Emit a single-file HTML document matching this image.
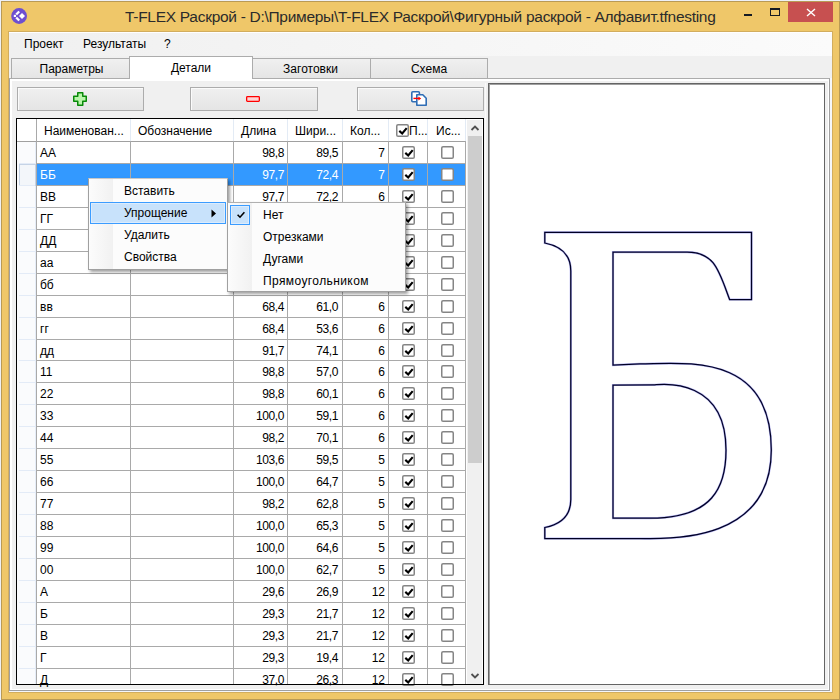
<!DOCTYPE html><html><head><meta charset="utf-8"><style>
*{margin:0;padding:0;box-sizing:border-box}
html,body{width:840px;height:700px;overflow:hidden;background:#eef0f6;font-family:"Liberation Sans",sans-serif;font-size:12px;color:#000}
.a{position:absolute}
.t{position:absolute;white-space:nowrap;line-height:14px}
</style></head><body>
<div class="a" style="left:1px;top:1px;width:839px;height:699px;background:#efc769;border:1px solid #b99a55"></div>
<div class="a" style="left:8px;top:31px;width:825px;height:662px;border:1px solid #d2ad5e"></div>
<svg class="a" style="left:8px;top:4px" width="24" height="24" viewBox="0 0 24 24">
<circle cx="11.1" cy="12" r="7.9" fill="#6e4fd0"/>
<path d="M14 9 L17 12 L14 15 L11 12 Z" fill="#fff"/>
<rect x="5.8" y="10.8" width="2.2" height="2.2" fill="#fff"/>
<path d="M8.2 10.6 L11.2 7.4" stroke="#fff" stroke-width="2.2"/>
<path d="M8.2 13.4 L11.2 16.6" stroke="#fff" stroke-width="2.2"/>
</svg>
<div class="t" style="left:125px;top:8px;font-size:15.5px;line-height:18px;color:#2b2b2b;letter-spacing:-0.29px">T-FLEX Раскрой - D:\Примеры\T-FLEX Раскрой\Фигурный раскрой - Алфавит.tfnesting</div>
<div class="a" style="left:744px;top:14px;width:8px;height:2px;background:#151a22"></div>
<div class="a" style="left:770px;top:8px;width:10px;height:8px;border:1px solid #151a22;border-top-width:2px"></div>
<div class="a" style="left:788px;top:2px;width:45px;height:20px;background:#c75050"></div>
<svg class="a" style="left:806px;top:8px" width="10" height="10" viewBox="0 0 10 10"><path d="M1 1 L9 8 M9 1 L1 8" stroke="#fff" stroke-width="1.4"/></svg>
<div class="a" style="left:9px;top:32px;width:823px;height:660px;background:#f0f0f0"></div>
<div class="a" style="left:830px;top:78px;width:2px;height:614px;background:#f5f7fb"></div>
<div class="a" style="left:9px;top:691px;width:823px;height:1px;background:#f5f7fb"></div>
<div class="a" style="left:9px;top:32px;width:823px;height:24px;background:linear-gradient(90deg,#f0f0f0,#fbfbfb);border-top:1px solid #fff"></div>
<div class="t" style="left:24px;top:37px">Проект</div>
<div class="t" style="left:83px;top:37px">Результаты</div>
<div class="t" style="left:164px;top:37px">?</div>
<div class="a" style="left:9px;top:78px;width:821px;height:613px;border:1px solid #a0a0a0;border-top-color:#acacac;background:#f0f0f0;box-shadow:inset 2px 2px 0 #fff,inset -1px -1px 0 #fff"></div>
<div class="a" style="left:11px;top:58px;width:121px;height:20px;background:linear-gradient(#f0f0f0,#e5e5e5);border:1px solid #acacac;border-bottom:none"></div>
<div class="t" style="left:11px;width:121px;text-align:center;top:62px">Параметры</div>
<div class="a" style="left:250px;top:58px;width:121px;height:20px;background:linear-gradient(#f0f0f0,#e5e5e5);border:1px solid #acacac;border-bottom:none"></div>
<div class="t" style="left:250px;width:121px;text-align:center;top:62px">Заготовки</div>
<div class="a" style="left:370px;top:58px;width:118px;height:20px;background:linear-gradient(#f0f0f0,#e5e5e5);border:1px solid #acacac;border-bottom:none"></div>
<div class="t" style="left:370px;width:118px;text-align:center;top:62px">Схема</div>
<div class="a" style="left:129px;top:56px;width:124px;height:23px;background:#fff;border:1px solid #acacac;border-bottom:none"></div>
<div class="t" style="left:129px;width:124px;text-align:center;top:61px">Детали</div>
<div class="a" style="left:17px;top:87px;width:127px;height:24px;background:linear-gradient(#f0f0f0,#e5e5e5);border:1px solid #acacac;box-shadow:inset 1px 1px 0 #fbfbfb"></div>
<svg class="a" style="left:72px;top:91px" width="16" height="16" viewBox="0 0 16 16"><path d="M5.75 1.75 H10.75 V5.25 H14.25 V10.25 H10.75 V14.25 H5.75 V10.25 H1.75 V5.25 H5.75 Z" fill="#b9f5aa" stroke="#088a08" stroke-width="1.5" stroke-linejoin="round"/></svg>
<div class="a" style="left:190px;top:87px;width:128px;height:24px;background:linear-gradient(#f0f0f0,#e5e5e5);border:1px solid #acacac;box-shadow:inset 1px 1px 0 #fbfbfb"></div>
<svg class="a" style="left:245px;top:95px" width="16" height="8" viewBox="0 0 16 8"><rect x="1.65" y="1.65" width="12.7" height="4.7" rx="0.8" fill="#ffd3d3" stroke="#ff0000" stroke-width="1.3"/></svg>
<div class="a" style="left:357px;top:87px;width:127px;height:24px;background:linear-gradient(#f0f0f0,#e5e5e5);border:1px solid #acacac;box-shadow:inset 1px 1px 0 #fbfbfb"></div>
<svg class="a" style="left:410px;top:90px" width="18" height="17" viewBox="0 0 18 17"><rect x="1.8" y="1.8" width="7.6" height="10" rx="1" fill="#fff" stroke="#2f6db5" stroke-width="1.6"/><path d="M6.8 4.8 H12.8 L16.2 8.2 V15.2 H6.8 Z" fill="#fff" stroke="#2f6db5" stroke-width="1.6" stroke-linejoin="round"/><path d="M3.4 8.4 H9" stroke="#ff0000" stroke-width="1.4"/><path d="M8.4 6.4 L11.2 8.4 L8.4 10.4 Z" fill="#ff0000"/></svg>
<div class="a" style="left:485px;top:83px;width:1px;height:602px;background:#fafafa"></div>
<div class="a" style="left:488px;top:83px;width:337px;height:602px;background:#fff;border:1px solid #646464;box-shadow:inset 1px 1px 0 #a0a0a0"></div>
<div class="a" style="left:16px;top:118px;width:468px;height:567px;background:#fff;border:1px solid #000"></div>
<div class="a" style="left:17px;top:119px;width:449px;height:22px;background:#fff"></div>
<div class="a" style="left:17px;top:141px;width:449px;height:1px;background:#a0a0a0"></div>
<div class="a" style="left:17px;top:142px;width:19px;height:542px;background:#fafbfd;border-right:1px solid #e6edf8"></div>
<div class="a" style="left:130px;top:119px;width:1px;height:22px;background:#e3ebf5"></div>
<div class="a" style="left:233px;top:119px;width:1px;height:22px;background:#e3ebf5"></div>
<div class="a" style="left:287px;top:119px;width:1px;height:22px;background:#e3ebf5"></div>
<div class="a" style="left:342px;top:119px;width:1px;height:22px;background:#e3ebf5"></div>
<div class="a" style="left:388px;top:119px;width:1px;height:22px;background:#e3ebf5"></div>
<div class="a" style="left:427px;top:119px;width:1px;height:22px;background:#e3ebf5"></div>
<div class="a" style="left:465px;top:119px;width:1px;height:22px;background:#e3ebf5"></div>
<div class="a" style="left:36px;top:119px;width:1px;height:22px;background:#a0a0a0"></div>
<div class="t" style="left:44px;top:124px">Наименован...</div>
<div class="t" style="left:138px;top:124px">Обозначение</div>
<div class="t" style="left:241px;top:124px">Длина</div>
<div class="t" style="left:295px;top:124px">Шири...</div>
<div class="t" style="left:350px;top:124px">Кол...</div>
<div class="t" style="left:409px;top:124px">П...</div>
<div class="t" style="left:436px;top:124px">Ис...</div>
<svg class="a" style="left:395px;top:123px" width="15" height="15" viewBox="0 0 15 15"><rect x="1.75" y="1.75" width="11.5" height="11.5" rx="1.3" fill="#fff" stroke="#858585" stroke-width="1.5"/><g transform="translate(1,1)"><path d="M3.3 6.9 L6.2 9.5 L10.7 4.1" fill="none" stroke="#000" stroke-width="2.1"/></g></svg>
<div class="a" style="left:37px;top:163px;width:429px;height:1px;background:#a9a9a9"></div>
<div class="a" style="left:19px;top:163px;width:16px;height:1px;background:#e3ebf7"></div>
<div class="t" style="left:40px;top:146px;color:#000">АА</div>
<div class="t" style="left:224px;width:60px;text-align:right;top:146px;color:#000;letter-spacing:-0.4px">98,8</div>
<div class="t" style="left:288px;width:50px;text-align:right;top:146px;color:#000;letter-spacing:-0.4px">89,5</div>
<div class="t" style="left:343px;width:42px;text-align:right;top:146px;color:#000">7</div>
<svg class="a" style="left:401px;top:145px" width="15" height="15" viewBox="0 0 15 15"><rect x="1.75" y="1.75" width="11.5" height="11.5" rx="1.3" fill="#fff" stroke="#858585" stroke-width="1.5"/><g transform="translate(1,1)"><path d="M3.3 6.9 L6.2 9.5 L10.7 4.1" fill="none" stroke="#000" stroke-width="2.1"/></g></svg>
<svg class="a" style="left:440px;top:145px" width="15" height="15" viewBox="0 0 15 15"><rect x="1.75" y="1.75" width="11.5" height="11.5" rx="1.3" fill="#fff" stroke="#858585" stroke-width="1.5"/><g transform="translate(1,1)"></g></svg>
<div class="a" style="left:37px;top:164px;width:429px;height:21px;background:#3399ff"></div>
<div class="a" style="left:19px;top:164px;width:17px;height:22px;border:1px solid #c5d3e6;background:#f3f6fa"></div>
<div class="a" style="left:37px;top:185px;width:429px;height:1px;background:#a9a9a9"></div>
<div class="a" style="left:19px;top:185px;width:16px;height:1px;background:#e3ebf7"></div>
<div class="t" style="left:40px;top:168px;color:#fff">ББ</div>
<div class="t" style="left:224px;width:60px;text-align:right;top:168px;color:#fff;letter-spacing:-0.4px">97,7</div>
<div class="t" style="left:288px;width:50px;text-align:right;top:168px;color:#fff;letter-spacing:-0.4px">72,4</div>
<div class="t" style="left:343px;width:42px;text-align:right;top:168px;color:#fff">7</div>
<svg class="a" style="left:401px;top:167px" width="15" height="15" viewBox="0 0 15 15"><rect x="1.75" y="1.75" width="11.5" height="11.5" rx="1.3" fill="#fff" stroke="#858585" stroke-width="1.5"/><g transform="translate(1,1)"><path d="M3.3 6.9 L6.2 9.5 L10.7 4.1" fill="none" stroke="#000" stroke-width="2.1"/></g></svg>
<svg class="a" style="left:440px;top:167px" width="15" height="15" viewBox="0 0 15 15"><rect x="1.75" y="1.75" width="11.5" height="11.5" rx="1.3" fill="#fff" stroke="#858585" stroke-width="1.5"/><g transform="translate(1,1)"></g></svg>
<div class="a" style="left:37px;top:207px;width:429px;height:1px;background:#a9a9a9"></div>
<div class="a" style="left:19px;top:207px;width:16px;height:1px;background:#e3ebf7"></div>
<div class="t" style="left:40px;top:190px;color:#000">ВВ</div>
<div class="t" style="left:224px;width:60px;text-align:right;top:190px;color:#000;letter-spacing:-0.4px">97,7</div>
<div class="t" style="left:288px;width:50px;text-align:right;top:190px;color:#000;letter-spacing:-0.4px">72,2</div>
<div class="t" style="left:343px;width:42px;text-align:right;top:190px;color:#000">6</div>
<svg class="a" style="left:401px;top:189px" width="15" height="15" viewBox="0 0 15 15"><rect x="1.75" y="1.75" width="11.5" height="11.5" rx="1.3" fill="#fff" stroke="#858585" stroke-width="1.5"/><g transform="translate(1,1)"><path d="M3.3 6.9 L6.2 9.5 L10.7 4.1" fill="none" stroke="#000" stroke-width="2.1"/></g></svg>
<svg class="a" style="left:440px;top:189px" width="15" height="15" viewBox="0 0 15 15"><rect x="1.75" y="1.75" width="11.5" height="11.5" rx="1.3" fill="#fff" stroke="#858585" stroke-width="1.5"/><g transform="translate(1,1)"></g></svg>
<div class="a" style="left:37px;top:229px;width:429px;height:1px;background:#a9a9a9"></div>
<div class="a" style="left:19px;top:229px;width:16px;height:1px;background:#e3ebf7"></div>
<div class="t" style="left:40px;top:212px;color:#000">ГГ</div>
<div class="t" style="left:224px;width:60px;text-align:right;top:212px;color:#000;letter-spacing:-0.4px">97,7</div>
<div class="t" style="left:288px;width:50px;text-align:right;top:212px;color:#000;letter-spacing:-0.4px">72,2</div>
<div class="t" style="left:343px;width:42px;text-align:right;top:212px;color:#000">6</div>
<svg class="a" style="left:401px;top:211px" width="15" height="15" viewBox="0 0 15 15"><rect x="1.75" y="1.75" width="11.5" height="11.5" rx="1.3" fill="#fff" stroke="#858585" stroke-width="1.5"/><g transform="translate(1,1)"><path d="M3.3 6.9 L6.2 9.5 L10.7 4.1" fill="none" stroke="#000" stroke-width="2.1"/></g></svg>
<svg class="a" style="left:440px;top:211px" width="15" height="15" viewBox="0 0 15 15"><rect x="1.75" y="1.75" width="11.5" height="11.5" rx="1.3" fill="#fff" stroke="#858585" stroke-width="1.5"/><g transform="translate(1,1)"></g></svg>
<div class="a" style="left:37px;top:251px;width:429px;height:1px;background:#a9a9a9"></div>
<div class="a" style="left:19px;top:251px;width:16px;height:1px;background:#e3ebf7"></div>
<div class="t" style="left:40px;top:234px;color:#000">ДД</div>
<div class="t" style="left:224px;width:60px;text-align:right;top:234px;color:#000;letter-spacing:-0.4px">97,7</div>
<div class="t" style="left:288px;width:50px;text-align:right;top:234px;color:#000;letter-spacing:-0.4px">72,2</div>
<div class="t" style="left:343px;width:42px;text-align:right;top:234px;color:#000">6</div>
<svg class="a" style="left:401px;top:233px" width="15" height="15" viewBox="0 0 15 15"><rect x="1.75" y="1.75" width="11.5" height="11.5" rx="1.3" fill="#fff" stroke="#858585" stroke-width="1.5"/><g transform="translate(1,1)"><path d="M3.3 6.9 L6.2 9.5 L10.7 4.1" fill="none" stroke="#000" stroke-width="2.1"/></g></svg>
<svg class="a" style="left:440px;top:233px" width="15" height="15" viewBox="0 0 15 15"><rect x="1.75" y="1.75" width="11.5" height="11.5" rx="1.3" fill="#fff" stroke="#858585" stroke-width="1.5"/><g transform="translate(1,1)"></g></svg>
<div class="a" style="left:37px;top:273px;width:429px;height:1px;background:#a9a9a9"></div>
<div class="a" style="left:19px;top:273px;width:16px;height:1px;background:#e3ebf7"></div>
<div class="t" style="left:40px;top:256px;color:#000">аа</div>
<div class="t" style="left:224px;width:60px;text-align:right;top:256px;color:#000;letter-spacing:-0.4px">68,4</div>
<div class="t" style="left:288px;width:50px;text-align:right;top:256px;color:#000;letter-spacing:-0.4px">61,0</div>
<div class="t" style="left:343px;width:42px;text-align:right;top:256px;color:#000">6</div>
<svg class="a" style="left:401px;top:255px" width="15" height="15" viewBox="0 0 15 15"><rect x="1.75" y="1.75" width="11.5" height="11.5" rx="1.3" fill="#fff" stroke="#858585" stroke-width="1.5"/><g transform="translate(1,1)"><path d="M3.3 6.9 L6.2 9.5 L10.7 4.1" fill="none" stroke="#000" stroke-width="2.1"/></g></svg>
<svg class="a" style="left:440px;top:255px" width="15" height="15" viewBox="0 0 15 15"><rect x="1.75" y="1.75" width="11.5" height="11.5" rx="1.3" fill="#fff" stroke="#858585" stroke-width="1.5"/><g transform="translate(1,1)"></g></svg>
<div class="a" style="left:37px;top:295px;width:429px;height:1px;background:#a9a9a9"></div>
<div class="a" style="left:19px;top:295px;width:16px;height:1px;background:#e3ebf7"></div>
<div class="t" style="left:40px;top:278px;color:#000">бб</div>
<div class="t" style="left:224px;width:60px;text-align:right;top:278px;color:#000;letter-spacing:-0.4px">68,4</div>
<div class="t" style="left:288px;width:50px;text-align:right;top:278px;color:#000;letter-spacing:-0.4px">61,0</div>
<div class="t" style="left:343px;width:42px;text-align:right;top:278px;color:#000">6</div>
<svg class="a" style="left:401px;top:277px" width="15" height="15" viewBox="0 0 15 15"><rect x="1.75" y="1.75" width="11.5" height="11.5" rx="1.3" fill="#fff" stroke="#858585" stroke-width="1.5"/><g transform="translate(1,1)"><path d="M3.3 6.9 L6.2 9.5 L10.7 4.1" fill="none" stroke="#000" stroke-width="2.1"/></g></svg>
<svg class="a" style="left:440px;top:277px" width="15" height="15" viewBox="0 0 15 15"><rect x="1.75" y="1.75" width="11.5" height="11.5" rx="1.3" fill="#fff" stroke="#858585" stroke-width="1.5"/><g transform="translate(1,1)"></g></svg>
<div class="a" style="left:37px;top:317px;width:429px;height:1px;background:#a9a9a9"></div>
<div class="a" style="left:19px;top:317px;width:16px;height:1px;background:#e3ebf7"></div>
<div class="t" style="left:40px;top:300px;color:#000">вв</div>
<div class="t" style="left:224px;width:60px;text-align:right;top:300px;color:#000;letter-spacing:-0.4px">68,4</div>
<div class="t" style="left:288px;width:50px;text-align:right;top:300px;color:#000;letter-spacing:-0.4px">61,0</div>
<div class="t" style="left:343px;width:42px;text-align:right;top:300px;color:#000">6</div>
<svg class="a" style="left:401px;top:299px" width="15" height="15" viewBox="0 0 15 15"><rect x="1.75" y="1.75" width="11.5" height="11.5" rx="1.3" fill="#fff" stroke="#858585" stroke-width="1.5"/><g transform="translate(1,1)"><path d="M3.3 6.9 L6.2 9.5 L10.7 4.1" fill="none" stroke="#000" stroke-width="2.1"/></g></svg>
<svg class="a" style="left:440px;top:299px" width="15" height="15" viewBox="0 0 15 15"><rect x="1.75" y="1.75" width="11.5" height="11.5" rx="1.3" fill="#fff" stroke="#858585" stroke-width="1.5"/><g transform="translate(1,1)"></g></svg>
<div class="a" style="left:37px;top:339px;width:429px;height:1px;background:#a9a9a9"></div>
<div class="a" style="left:19px;top:339px;width:16px;height:1px;background:#e3ebf7"></div>
<div class="t" style="left:40px;top:322px;color:#000">гг</div>
<div class="t" style="left:224px;width:60px;text-align:right;top:322px;color:#000;letter-spacing:-0.4px">68,4</div>
<div class="t" style="left:288px;width:50px;text-align:right;top:322px;color:#000;letter-spacing:-0.4px">53,6</div>
<div class="t" style="left:343px;width:42px;text-align:right;top:322px;color:#000">6</div>
<svg class="a" style="left:401px;top:321px" width="15" height="15" viewBox="0 0 15 15"><rect x="1.75" y="1.75" width="11.5" height="11.5" rx="1.3" fill="#fff" stroke="#858585" stroke-width="1.5"/><g transform="translate(1,1)"><path d="M3.3 6.9 L6.2 9.5 L10.7 4.1" fill="none" stroke="#000" stroke-width="2.1"/></g></svg>
<svg class="a" style="left:440px;top:321px" width="15" height="15" viewBox="0 0 15 15"><rect x="1.75" y="1.75" width="11.5" height="11.5" rx="1.3" fill="#fff" stroke="#858585" stroke-width="1.5"/><g transform="translate(1,1)"></g></svg>
<div class="a" style="left:37px;top:360px;width:429px;height:1px;background:#a9a9a9"></div>
<div class="a" style="left:19px;top:360px;width:16px;height:1px;background:#e3ebf7"></div>
<div class="t" style="left:40px;top:344px;color:#000">дд</div>
<div class="t" style="left:224px;width:60px;text-align:right;top:344px;color:#000;letter-spacing:-0.4px">91,7</div>
<div class="t" style="left:288px;width:50px;text-align:right;top:344px;color:#000;letter-spacing:-0.4px">74,1</div>
<div class="t" style="left:343px;width:42px;text-align:right;top:344px;color:#000">6</div>
<svg class="a" style="left:401px;top:343px" width="15" height="15" viewBox="0 0 15 15"><rect x="1.75" y="1.75" width="11.5" height="11.5" rx="1.3" fill="#fff" stroke="#858585" stroke-width="1.5"/><g transform="translate(1,1)"><path d="M3.3 6.9 L6.2 9.5 L10.7 4.1" fill="none" stroke="#000" stroke-width="2.1"/></g></svg>
<svg class="a" style="left:440px;top:343px" width="15" height="15" viewBox="0 0 15 15"><rect x="1.75" y="1.75" width="11.5" height="11.5" rx="1.3" fill="#fff" stroke="#858585" stroke-width="1.5"/><g transform="translate(1,1)"></g></svg>
<div class="a" style="left:37px;top:382px;width:429px;height:1px;background:#a9a9a9"></div>
<div class="a" style="left:19px;top:382px;width:16px;height:1px;background:#e3ebf7"></div>
<div class="t" style="left:40px;top:365px;color:#000">11</div>
<div class="t" style="left:224px;width:60px;text-align:right;top:365px;color:#000;letter-spacing:-0.4px">98,8</div>
<div class="t" style="left:288px;width:50px;text-align:right;top:365px;color:#000;letter-spacing:-0.4px">57,0</div>
<div class="t" style="left:343px;width:42px;text-align:right;top:365px;color:#000">6</div>
<svg class="a" style="left:401px;top:364px" width="15" height="15" viewBox="0 0 15 15"><rect x="1.75" y="1.75" width="11.5" height="11.5" rx="1.3" fill="#fff" stroke="#858585" stroke-width="1.5"/><g transform="translate(1,1)"><path d="M3.3 6.9 L6.2 9.5 L10.7 4.1" fill="none" stroke="#000" stroke-width="2.1"/></g></svg>
<svg class="a" style="left:440px;top:364px" width="15" height="15" viewBox="0 0 15 15"><rect x="1.75" y="1.75" width="11.5" height="11.5" rx="1.3" fill="#fff" stroke="#858585" stroke-width="1.5"/><g transform="translate(1,1)"></g></svg>
<div class="a" style="left:37px;top:404px;width:429px;height:1px;background:#a9a9a9"></div>
<div class="a" style="left:19px;top:404px;width:16px;height:1px;background:#e3ebf7"></div>
<div class="t" style="left:40px;top:387px;color:#000">22</div>
<div class="t" style="left:224px;width:60px;text-align:right;top:387px;color:#000;letter-spacing:-0.4px">98,8</div>
<div class="t" style="left:288px;width:50px;text-align:right;top:387px;color:#000;letter-spacing:-0.4px">60,1</div>
<div class="t" style="left:343px;width:42px;text-align:right;top:387px;color:#000">6</div>
<svg class="a" style="left:401px;top:386px" width="15" height="15" viewBox="0 0 15 15"><rect x="1.75" y="1.75" width="11.5" height="11.5" rx="1.3" fill="#fff" stroke="#858585" stroke-width="1.5"/><g transform="translate(1,1)"><path d="M3.3 6.9 L6.2 9.5 L10.7 4.1" fill="none" stroke="#000" stroke-width="2.1"/></g></svg>
<svg class="a" style="left:440px;top:386px" width="15" height="15" viewBox="0 0 15 15"><rect x="1.75" y="1.75" width="11.5" height="11.5" rx="1.3" fill="#fff" stroke="#858585" stroke-width="1.5"/><g transform="translate(1,1)"></g></svg>
<div class="a" style="left:37px;top:426px;width:429px;height:1px;background:#a9a9a9"></div>
<div class="a" style="left:19px;top:426px;width:16px;height:1px;background:#e3ebf7"></div>
<div class="t" style="left:40px;top:409px;color:#000">33</div>
<div class="t" style="left:224px;width:60px;text-align:right;top:409px;color:#000;letter-spacing:-0.4px">100,0</div>
<div class="t" style="left:288px;width:50px;text-align:right;top:409px;color:#000;letter-spacing:-0.4px">59,1</div>
<div class="t" style="left:343px;width:42px;text-align:right;top:409px;color:#000">6</div>
<svg class="a" style="left:401px;top:408px" width="15" height="15" viewBox="0 0 15 15"><rect x="1.75" y="1.75" width="11.5" height="11.5" rx="1.3" fill="#fff" stroke="#858585" stroke-width="1.5"/><g transform="translate(1,1)"><path d="M3.3 6.9 L6.2 9.5 L10.7 4.1" fill="none" stroke="#000" stroke-width="2.1"/></g></svg>
<svg class="a" style="left:440px;top:408px" width="15" height="15" viewBox="0 0 15 15"><rect x="1.75" y="1.75" width="11.5" height="11.5" rx="1.3" fill="#fff" stroke="#858585" stroke-width="1.5"/><g transform="translate(1,1)"></g></svg>
<div class="a" style="left:37px;top:448px;width:429px;height:1px;background:#a9a9a9"></div>
<div class="a" style="left:19px;top:448px;width:16px;height:1px;background:#e3ebf7"></div>
<div class="t" style="left:40px;top:431px;color:#000">44</div>
<div class="t" style="left:224px;width:60px;text-align:right;top:431px;color:#000;letter-spacing:-0.4px">98,2</div>
<div class="t" style="left:288px;width:50px;text-align:right;top:431px;color:#000;letter-spacing:-0.4px">70,1</div>
<div class="t" style="left:343px;width:42px;text-align:right;top:431px;color:#000">6</div>
<svg class="a" style="left:401px;top:430px" width="15" height="15" viewBox="0 0 15 15"><rect x="1.75" y="1.75" width="11.5" height="11.5" rx="1.3" fill="#fff" stroke="#858585" stroke-width="1.5"/><g transform="translate(1,1)"><path d="M3.3 6.9 L6.2 9.5 L10.7 4.1" fill="none" stroke="#000" stroke-width="2.1"/></g></svg>
<svg class="a" style="left:440px;top:430px" width="15" height="15" viewBox="0 0 15 15"><rect x="1.75" y="1.75" width="11.5" height="11.5" rx="1.3" fill="#fff" stroke="#858585" stroke-width="1.5"/><g transform="translate(1,1)"></g></svg>
<div class="a" style="left:37px;top:470px;width:429px;height:1px;background:#a9a9a9"></div>
<div class="a" style="left:19px;top:470px;width:16px;height:1px;background:#e3ebf7"></div>
<div class="t" style="left:40px;top:453px;color:#000">55</div>
<div class="t" style="left:224px;width:60px;text-align:right;top:453px;color:#000;letter-spacing:-0.4px">103,6</div>
<div class="t" style="left:288px;width:50px;text-align:right;top:453px;color:#000;letter-spacing:-0.4px">59,5</div>
<div class="t" style="left:343px;width:42px;text-align:right;top:453px;color:#000">5</div>
<svg class="a" style="left:401px;top:452px" width="15" height="15" viewBox="0 0 15 15"><rect x="1.75" y="1.75" width="11.5" height="11.5" rx="1.3" fill="#fff" stroke="#858585" stroke-width="1.5"/><g transform="translate(1,1)"><path d="M3.3 6.9 L6.2 9.5 L10.7 4.1" fill="none" stroke="#000" stroke-width="2.1"/></g></svg>
<svg class="a" style="left:440px;top:452px" width="15" height="15" viewBox="0 0 15 15"><rect x="1.75" y="1.75" width="11.5" height="11.5" rx="1.3" fill="#fff" stroke="#858585" stroke-width="1.5"/><g transform="translate(1,1)"></g></svg>
<div class="a" style="left:37px;top:492px;width:429px;height:1px;background:#a9a9a9"></div>
<div class="a" style="left:19px;top:492px;width:16px;height:1px;background:#e3ebf7"></div>
<div class="t" style="left:40px;top:475px;color:#000">66</div>
<div class="t" style="left:224px;width:60px;text-align:right;top:475px;color:#000;letter-spacing:-0.4px">100,0</div>
<div class="t" style="left:288px;width:50px;text-align:right;top:475px;color:#000;letter-spacing:-0.4px">64,7</div>
<div class="t" style="left:343px;width:42px;text-align:right;top:475px;color:#000">5</div>
<svg class="a" style="left:401px;top:474px" width="15" height="15" viewBox="0 0 15 15"><rect x="1.75" y="1.75" width="11.5" height="11.5" rx="1.3" fill="#fff" stroke="#858585" stroke-width="1.5"/><g transform="translate(1,1)"><path d="M3.3 6.9 L6.2 9.5 L10.7 4.1" fill="none" stroke="#000" stroke-width="2.1"/></g></svg>
<svg class="a" style="left:440px;top:474px" width="15" height="15" viewBox="0 0 15 15"><rect x="1.75" y="1.75" width="11.5" height="11.5" rx="1.3" fill="#fff" stroke="#858585" stroke-width="1.5"/><g transform="translate(1,1)"></g></svg>
<div class="a" style="left:37px;top:514px;width:429px;height:1px;background:#a9a9a9"></div>
<div class="a" style="left:19px;top:514px;width:16px;height:1px;background:#e3ebf7"></div>
<div class="t" style="left:40px;top:497px;color:#000">77</div>
<div class="t" style="left:224px;width:60px;text-align:right;top:497px;color:#000;letter-spacing:-0.4px">98,2</div>
<div class="t" style="left:288px;width:50px;text-align:right;top:497px;color:#000;letter-spacing:-0.4px">62,8</div>
<div class="t" style="left:343px;width:42px;text-align:right;top:497px;color:#000">5</div>
<svg class="a" style="left:401px;top:496px" width="15" height="15" viewBox="0 0 15 15"><rect x="1.75" y="1.75" width="11.5" height="11.5" rx="1.3" fill="#fff" stroke="#858585" stroke-width="1.5"/><g transform="translate(1,1)"><path d="M3.3 6.9 L6.2 9.5 L10.7 4.1" fill="none" stroke="#000" stroke-width="2.1"/></g></svg>
<svg class="a" style="left:440px;top:496px" width="15" height="15" viewBox="0 0 15 15"><rect x="1.75" y="1.75" width="11.5" height="11.5" rx="1.3" fill="#fff" stroke="#858585" stroke-width="1.5"/><g transform="translate(1,1)"></g></svg>
<div class="a" style="left:37px;top:536px;width:429px;height:1px;background:#a9a9a9"></div>
<div class="a" style="left:19px;top:536px;width:16px;height:1px;background:#e3ebf7"></div>
<div class="t" style="left:40px;top:519px;color:#000">88</div>
<div class="t" style="left:224px;width:60px;text-align:right;top:519px;color:#000;letter-spacing:-0.4px">100,0</div>
<div class="t" style="left:288px;width:50px;text-align:right;top:519px;color:#000;letter-spacing:-0.4px">65,3</div>
<div class="t" style="left:343px;width:42px;text-align:right;top:519px;color:#000">5</div>
<svg class="a" style="left:401px;top:518px" width="15" height="15" viewBox="0 0 15 15"><rect x="1.75" y="1.75" width="11.5" height="11.5" rx="1.3" fill="#fff" stroke="#858585" stroke-width="1.5"/><g transform="translate(1,1)"><path d="M3.3 6.9 L6.2 9.5 L10.7 4.1" fill="none" stroke="#000" stroke-width="2.1"/></g></svg>
<svg class="a" style="left:440px;top:518px" width="15" height="15" viewBox="0 0 15 15"><rect x="1.75" y="1.75" width="11.5" height="11.5" rx="1.3" fill="#fff" stroke="#858585" stroke-width="1.5"/><g transform="translate(1,1)"></g></svg>
<div class="a" style="left:37px;top:558px;width:429px;height:1px;background:#a9a9a9"></div>
<div class="a" style="left:19px;top:558px;width:16px;height:1px;background:#e3ebf7"></div>
<div class="t" style="left:40px;top:541px;color:#000">99</div>
<div class="t" style="left:224px;width:60px;text-align:right;top:541px;color:#000;letter-spacing:-0.4px">100,0</div>
<div class="t" style="left:288px;width:50px;text-align:right;top:541px;color:#000;letter-spacing:-0.4px">64,6</div>
<div class="t" style="left:343px;width:42px;text-align:right;top:541px;color:#000">5</div>
<svg class="a" style="left:401px;top:540px" width="15" height="15" viewBox="0 0 15 15"><rect x="1.75" y="1.75" width="11.5" height="11.5" rx="1.3" fill="#fff" stroke="#858585" stroke-width="1.5"/><g transform="translate(1,1)"><path d="M3.3 6.9 L6.2 9.5 L10.7 4.1" fill="none" stroke="#000" stroke-width="2.1"/></g></svg>
<svg class="a" style="left:440px;top:540px" width="15" height="15" viewBox="0 0 15 15"><rect x="1.75" y="1.75" width="11.5" height="11.5" rx="1.3" fill="#fff" stroke="#858585" stroke-width="1.5"/><g transform="translate(1,1)"></g></svg>
<div class="a" style="left:37px;top:580px;width:429px;height:1px;background:#a9a9a9"></div>
<div class="a" style="left:19px;top:580px;width:16px;height:1px;background:#e3ebf7"></div>
<div class="t" style="left:40px;top:563px;color:#000">00</div>
<div class="t" style="left:224px;width:60px;text-align:right;top:563px;color:#000;letter-spacing:-0.4px">100,0</div>
<div class="t" style="left:288px;width:50px;text-align:right;top:563px;color:#000;letter-spacing:-0.4px">62,7</div>
<div class="t" style="left:343px;width:42px;text-align:right;top:563px;color:#000">5</div>
<svg class="a" style="left:401px;top:562px" width="15" height="15" viewBox="0 0 15 15"><rect x="1.75" y="1.75" width="11.5" height="11.5" rx="1.3" fill="#fff" stroke="#858585" stroke-width="1.5"/><g transform="translate(1,1)"><path d="M3.3 6.9 L6.2 9.5 L10.7 4.1" fill="none" stroke="#000" stroke-width="2.1"/></g></svg>
<svg class="a" style="left:440px;top:562px" width="15" height="15" viewBox="0 0 15 15"><rect x="1.75" y="1.75" width="11.5" height="11.5" rx="1.3" fill="#fff" stroke="#858585" stroke-width="1.5"/><g transform="translate(1,1)"></g></svg>
<div class="a" style="left:37px;top:602px;width:429px;height:1px;background:#a9a9a9"></div>
<div class="a" style="left:19px;top:602px;width:16px;height:1px;background:#e3ebf7"></div>
<div class="t" style="left:40px;top:585px;color:#000">А</div>
<div class="t" style="left:224px;width:60px;text-align:right;top:585px;color:#000;letter-spacing:-0.4px">29,6</div>
<div class="t" style="left:288px;width:50px;text-align:right;top:585px;color:#000;letter-spacing:-0.4px">26,9</div>
<div class="t" style="left:343px;width:42px;text-align:right;top:585px;color:#000">12</div>
<svg class="a" style="left:401px;top:584px" width="15" height="15" viewBox="0 0 15 15"><rect x="1.75" y="1.75" width="11.5" height="11.5" rx="1.3" fill="#fff" stroke="#858585" stroke-width="1.5"/><g transform="translate(1,1)"><path d="M3.3 6.9 L6.2 9.5 L10.7 4.1" fill="none" stroke="#000" stroke-width="2.1"/></g></svg>
<svg class="a" style="left:440px;top:584px" width="15" height="15" viewBox="0 0 15 15"><rect x="1.75" y="1.75" width="11.5" height="11.5" rx="1.3" fill="#fff" stroke="#858585" stroke-width="1.5"/><g transform="translate(1,1)"></g></svg>
<div class="a" style="left:37px;top:624px;width:429px;height:1px;background:#a9a9a9"></div>
<div class="a" style="left:19px;top:624px;width:16px;height:1px;background:#e3ebf7"></div>
<div class="t" style="left:40px;top:607px;color:#000">Б</div>
<div class="t" style="left:224px;width:60px;text-align:right;top:607px;color:#000;letter-spacing:-0.4px">29,3</div>
<div class="t" style="left:288px;width:50px;text-align:right;top:607px;color:#000;letter-spacing:-0.4px">21,7</div>
<div class="t" style="left:343px;width:42px;text-align:right;top:607px;color:#000">12</div>
<svg class="a" style="left:401px;top:606px" width="15" height="15" viewBox="0 0 15 15"><rect x="1.75" y="1.75" width="11.5" height="11.5" rx="1.3" fill="#fff" stroke="#858585" stroke-width="1.5"/><g transform="translate(1,1)"><path d="M3.3 6.9 L6.2 9.5 L10.7 4.1" fill="none" stroke="#000" stroke-width="2.1"/></g></svg>
<svg class="a" style="left:440px;top:606px" width="15" height="15" viewBox="0 0 15 15"><rect x="1.75" y="1.75" width="11.5" height="11.5" rx="1.3" fill="#fff" stroke="#858585" stroke-width="1.5"/><g transform="translate(1,1)"></g></svg>
<div class="a" style="left:37px;top:646px;width:429px;height:1px;background:#a9a9a9"></div>
<div class="a" style="left:19px;top:646px;width:16px;height:1px;background:#e3ebf7"></div>
<div class="t" style="left:40px;top:629px;color:#000">В</div>
<div class="t" style="left:224px;width:60px;text-align:right;top:629px;color:#000;letter-spacing:-0.4px">29,3</div>
<div class="t" style="left:288px;width:50px;text-align:right;top:629px;color:#000;letter-spacing:-0.4px">21,7</div>
<div class="t" style="left:343px;width:42px;text-align:right;top:629px;color:#000">12</div>
<svg class="a" style="left:401px;top:628px" width="15" height="15" viewBox="0 0 15 15"><rect x="1.75" y="1.75" width="11.5" height="11.5" rx="1.3" fill="#fff" stroke="#858585" stroke-width="1.5"/><g transform="translate(1,1)"><path d="M3.3 6.9 L6.2 9.5 L10.7 4.1" fill="none" stroke="#000" stroke-width="2.1"/></g></svg>
<svg class="a" style="left:440px;top:628px" width="15" height="15" viewBox="0 0 15 15"><rect x="1.75" y="1.75" width="11.5" height="11.5" rx="1.3" fill="#fff" stroke="#858585" stroke-width="1.5"/><g transform="translate(1,1)"></g></svg>
<div class="a" style="left:37px;top:668px;width:429px;height:1px;background:#a9a9a9"></div>
<div class="a" style="left:19px;top:668px;width:16px;height:1px;background:#e3ebf7"></div>
<div class="t" style="left:40px;top:651px;color:#000">Г</div>
<div class="t" style="left:224px;width:60px;text-align:right;top:651px;color:#000;letter-spacing:-0.4px">29,3</div>
<div class="t" style="left:288px;width:50px;text-align:right;top:651px;color:#000;letter-spacing:-0.4px">19,4</div>
<div class="t" style="left:343px;width:42px;text-align:right;top:651px;color:#000">12</div>
<svg class="a" style="left:401px;top:650px" width="15" height="15" viewBox="0 0 15 15"><rect x="1.75" y="1.75" width="11.5" height="11.5" rx="1.3" fill="#fff" stroke="#858585" stroke-width="1.5"/><g transform="translate(1,1)"><path d="M3.3 6.9 L6.2 9.5 L10.7 4.1" fill="none" stroke="#000" stroke-width="2.1"/></g></svg>
<svg class="a" style="left:440px;top:650px" width="15" height="15" viewBox="0 0 15 15"><rect x="1.75" y="1.75" width="11.5" height="11.5" rx="1.3" fill="#fff" stroke="#858585" stroke-width="1.5"/><g transform="translate(1,1)"></g></svg>
<div class="t" style="left:40px;top:673px;color:#000">Д</div>
<div class="t" style="left:224px;width:60px;text-align:right;top:673px;color:#000;letter-spacing:-0.4px">37,0</div>
<div class="t" style="left:288px;width:50px;text-align:right;top:673px;color:#000;letter-spacing:-0.4px">26,3</div>
<div class="t" style="left:343px;width:42px;text-align:right;top:673px;color:#000">12</div>
<svg class="a" style="left:401px;top:672px" width="15" height="15" viewBox="0 0 15 15"><rect x="1.75" y="1.75" width="11.5" height="11.5" rx="1.3" fill="#fff" stroke="#858585" stroke-width="1.5"/><g transform="translate(1,1)"><path d="M3.3 6.9 L6.2 9.5 L10.7 4.1" fill="none" stroke="#000" stroke-width="2.1"/></g></svg>
<svg class="a" style="left:440px;top:672px" width="15" height="15" viewBox="0 0 15 15"><rect x="1.75" y="1.75" width="11.5" height="11.5" rx="1.3" fill="#fff" stroke="#858585" stroke-width="1.5"/><g transform="translate(1,1)"></g></svg>
<div class="a" style="left:36px;top:119px;width:1px;height:565px;background:#a9a9a9"></div>
<div class="a" style="left:130px;top:141px;width:1px;height:543px;background:#a9a9a9"></div>
<div class="a" style="left:233px;top:141px;width:1px;height:543px;background:#a9a9a9"></div>
<div class="a" style="left:287px;top:141px;width:1px;height:543px;background:#a9a9a9"></div>
<div class="a" style="left:342px;top:141px;width:1px;height:543px;background:#a9a9a9"></div>
<div class="a" style="left:388px;top:141px;width:1px;height:543px;background:#a9a9a9"></div>
<div class="a" style="left:427px;top:141px;width:1px;height:543px;background:#a9a9a9"></div>
<div class="a" style="left:465px;top:141px;width:1px;height:543px;background:#a9a9a9"></div>
<div class="a" style="left:16px;top:684px;width:468px;height:1px;background:#000"></div>
<div class="a" style="left:466px;top:119px;width:17px;height:565px;background:#f0f0f0;border-left:1px solid #fff;border-right:1px solid #fff;border-top:1px solid #fff"></div>
<div class="a" style="left:468px;top:136px;width:14px;height:327px;background:#cdcdcd"></div>
<svg class="a" style="left:470px;top:124px" width="10" height="8" viewBox="0 0 10 8"><path d="M1.5 6 L5 2.5 L8.5 6" fill="none" stroke="#505050" stroke-width="1.8"/></svg>
<svg class="a" style="left:470px;top:672px" width="10" height="8" viewBox="0 0 10 8"><path d="M1.5 2 L5 5.5 L8.5 2" fill="none" stroke="#505050" stroke-width="1.8"/></svg>
<svg class="a" style="left:0;top:0" width="840" height="700" viewBox="0 0 840 700"><path d="M544.8 232.4 H751.5 V299.5 H729.6 C718.7 270.5 715 252.2 687 252.2 H613 V365 L640 363.8 C683 363.8 771.3 351 771.3 450 C771.3 546 662 538.5 640 538.5 H544.8 V527.5 C559 524.7 570.8 517.5 570.8 499.5 V271 C570.8 253 559 245.8 544.8 243 Z M613 385 L655 384.8 C658 384.8 726 375 726 450 C726 487 713 518.2 650 518.2 H613 Z" fill="none" stroke="#6a6ae8" stroke-opacity="0.5" stroke-width="2.2" stroke-linejoin="miter"/><path d="M544.8 232.4 H751.5 V299.5 H729.6 C718.7 270.5 715 252.2 687 252.2 H613 V365 L640 363.8 C683 363.8 771.3 351 771.3 450 C771.3 546 662 538.5 640 538.5 H544.8 V527.5 C559 524.7 570.8 517.5 570.8 499.5 V271 C570.8 253 559 245.8 544.8 243 Z M613 385 L655 384.8 C658 384.8 726 375 726 450 C726 487 713 518.2 650 518.2 H613 Z" fill="none" stroke="#000024" stroke-width="1.25" stroke-linejoin="miter"/></svg>
<div class="a" style="left:88px;top:178px;width:140px;height:92px;background:#fcfcfc;border:1px solid #a0a0a0;border-top-color:#c8c8c8;box-shadow:2px 2px 3px rgba(0,0,0,0.38)"></div>
<div class="a" style="left:89px;top:179px;width:24px;height:90px;background:linear-gradient(90deg,#fcfcfc,#f1f1f1)"></div>
<div class="a" style="left:90px;top:202px;width:136px;height:22px;background:#c8e2fb;border:1px solid #3b9cff;box-shadow:inset 0 0 0 1px #dcecfd"></div>
<div class="t" style="left:124px;top:184px">Вставить</div>
<div class="t" style="left:124px;top:206px">Упрощение</div>
<div class="t" style="left:124px;top:228px">Удалить</div>
<div class="t" style="left:124px;top:250px">Свойства</div>
<svg class="a" style="left:211px;top:209px" width="6" height="9" viewBox="0 0 6 9"><path d="M0.5 0.5 L5 4.5 L0.5 8.5 Z" fill="#000"/></svg>
<div class="a" style="left:227px;top:202px;width:179px;height:90px;background:#fcfcfc;border:1px solid #a0a0a0;border-top-color:#b0b0b0;box-shadow:2px 2px 3px rgba(0,0,0,0.38)"></div>
<div class="a" style="left:228px;top:203px;width:24px;height:88px;background:linear-gradient(90deg,#fcfcfc,#f1f1f1)"></div>
<div class="a" style="left:230px;top:205px;width:20px;height:20px;background:#c8e2fb;border:1px solid #3b9cff;box-shadow:inset 0 0 0 1px #dcecfd"></div>
<svg class="a" style="left:234px;top:208px" width="14" height="14" viewBox="0 0 14 14"><path d="M3.6 6.8 L6 9.2 L10.4 4.2" fill="none" stroke="#000" stroke-width="1.6"/></svg>
<div class="t" style="left:263px;top:208px">Нет</div>
<div class="t" style="left:263px;top:230px">Отрезками</div>
<div class="t" style="left:263px;top:252px">Дугами</div>
<div class="t" style="left:263px;top:274px;letter-spacing:0.4px">Прямоугольником</div>
</body></html>
